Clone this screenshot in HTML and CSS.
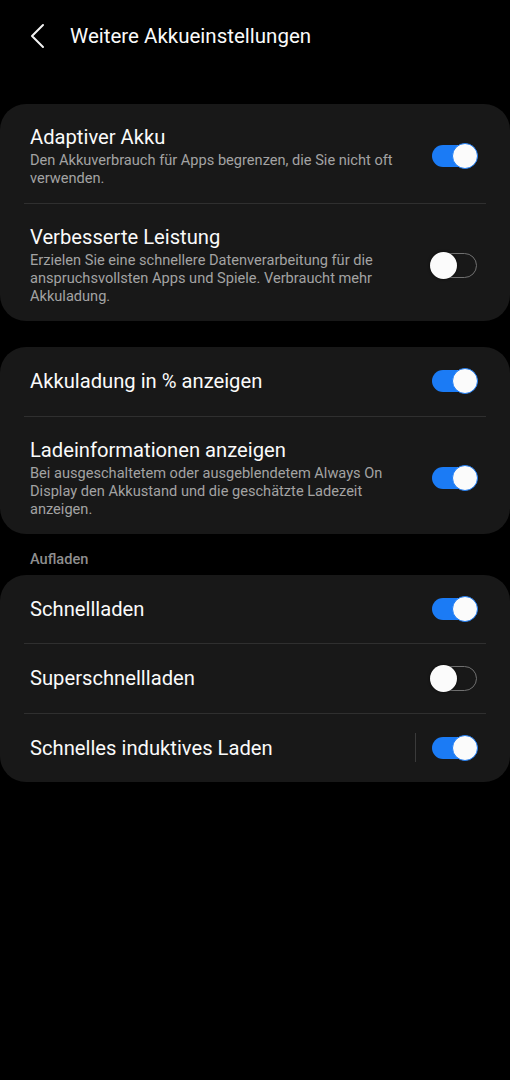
FILE: index.html
```html
<!DOCTYPE html>
<html lang="de">
<head>
    <meta charset="UTF-8">
    <meta name="viewport" content="width=device-width, initial-scale=1.0">
    <title>Weitere Akkueinstellungen</title>
    <link rel="stylesheet" href="styles.css">
</head>
<body>
    <div class="page">
        <header class="topbar">
            <svg class="back" width="24" height="30" viewBox="0 0 24 30">
                <path d="M17 4 L6 15 L17 26" fill="none" stroke="#f2f2f2" stroke-width="2" stroke-linecap="round" stroke-linejoin="round"/>
            </svg>
            <h1>Weitere Akkueinstellungen</h1>
        </header>

        <section class="card first">
            <div class="row">
                <div class="text">
                    <div class="title">Adaptiver Akku</div>
                    <div class="sub">Den Akkuverbrauch für Apps begrenzen, die Sie nicht oft verwenden.</div>
                </div>
                <div class="switch on"><span class="thumb"></span></div>
            </div>
            <div class="divider"></div>
            <div class="row">
                <div class="text">
                    <div class="title">Verbesserte Leistung</div>
                    <div class="sub">Erzielen Sie eine schnellere Datenverarbeitung für die anspruchsvollsten Apps und Spiele. Verbraucht mehr Akkuladung.</div>
                </div>
                <div class="switch off"><span class="thumb"></span></div>
            </div>
        </section>

        <section class="card">
            <div class="row single">
                <div class="text">
                    <div class="title">Akkuladung in % anzeigen</div>
                </div>
                <div class="switch on"><span class="thumb"></span></div>
            </div>
            <div class="divider"></div>
            <div class="row">
                <div class="text">
                    <div class="title">Ladeinformationen anzeigen</div>
                    <div class="sub">Bei ausgeschaltetem oder ausgeblendetem Always On Display den Akkustand und die geschätzte Ladezeit anzeigen.</div>
                </div>
                <div class="switch on"><span class="thumb"></span></div>
            </div>
        </section>

        <div class="label">Aufladen</div>

        <section class="card">
            <div class="row single">
                <div class="text">
                    <div class="title">Schnellladen</div>
                </div>
                <div class="switch on"><span class="thumb"></span></div>
            </div>
            <div class="divider"></div>
            <div class="row single">
                <div class="text">
                    <div class="title">Superschnellladen</div>
                </div>
                <div class="switch off"><span class="thumb"></span></div>
            </div>
            <div class="divider"></div>
            <div class="row single">
                <div class="text">
                    <div class="title">Schnelles induktives Laden</div>
                </div>
                <div class="vline"></div>
                <div class="switch on"><span class="thumb"></span></div>
            </div>
        </section>
    </div>
</body>
</html>
```

FILE: styles.css
```css
html, body { margin: 0; background: #000; }
body { font-family: Roboto, "Noto Sans", sans-serif; color: #fafafa; }
.page { display: flex; flex-direction: column; width: 510px; }

.topbar { height: 72px; display: flex; align-items: center; padding-left: 26px; box-sizing: border-box; }
.back { display: block; }
.topbar h1 { margin: 0 0 0 20px; font-size: 20.5px; font-weight: 400; color: #fafafa; }

.card { background: #181818; border-radius: 26px; display: flex; flex-direction: column; }
.card.first { margin-top: 32px; }
.card + .card { margin-top: 26px; }

.row { display: flex; align-items: center; padding: 21px 33px 16px 30px; }
.row.single { height: 68.5px; padding-top: 0; padding-bottom: 0; box-sizing: border-box; }
.text { flex: 1; min-width: 0; padding-right: 28px; }
.title { font-size: 20.2px; line-height: 24px; color: #fafafa; }
.sub { margin-top: 2px; font-size: 14.6px; line-height: 18px; color: #a3a3a3; }

.divider { height: 1px; background: #2f2f2f; margin: 0 24px; }

.label { padding: 16px 30px 7px; font-size: 14.6px; line-height: 18px; font-weight: 500; color: #8e8e8e; }

.vline { width: 1px; height: 29px; background: #3a3a3a; margin-right: 16px; margin-left: -12px; }

.switch { width: 45px; height: 22px; border-radius: 11px; box-sizing: border-box; display: flex; align-items: center; flex: none; }
.switch.on { background: #1b7bf5; justify-content: flex-end; }
.switch.off { height: 25px; border-radius: 13px; border: 1.5px solid #707070; justify-content: flex-start; }
.thumb { width: 26px; height: 26px; border-radius: 50%; background: #fbfbfb; box-sizing: border-box; flex: none; }
.switch.on .thumb { border: 1.5px solid #1b7bf5; margin-right: -1px; }
.switch.off .thumb { width: 27px; height: 27px; margin-left: -3px; box-shadow: 0 0 3px rgba(0,0,0,0.7); }
```
